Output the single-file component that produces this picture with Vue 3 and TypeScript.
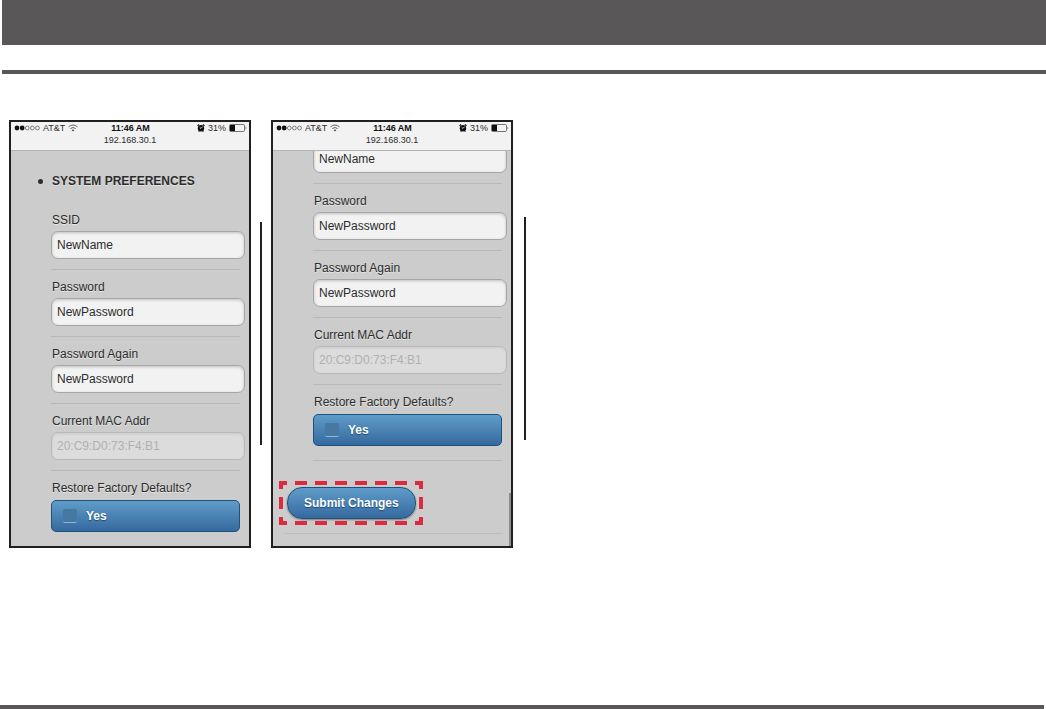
<script setup lang="ts">
import { ref } from 'vue'

interface Field {
  key: string
  label: string
  value: string
  disabled?: boolean
}

interface Screen {
  id: string
  scrolled: boolean
}

const fields = ref<Field[]>([
  { key: 'ssid', label: 'SSID', value: 'NewName' },
  { key: 'password', label: 'Password', value: 'NewPassword' },
  { key: 'again', label: 'Password Again', value: 'NewPassword' },
  { key: 'mac', label: 'Current MAC Addr', value: '20:C9:D0:73:F4:B1', disabled: true },
])

const restore = ref(false)

const screens: Screen[] = [
  { id: 'top', scrolled: false },
  { id: 'bottom', scrolled: true },
]

// On the scrolled screen the first label has moved above the visible area.
const labelShown = (s: Screen, f: Field): boolean => !(s.scrolled && f.key === 'ssid')
</script>

<template>
  <div class="page">
    <header class="banner"></header>
    <div class="rule"></div>
    <main class="figures">
      <template v-for="s in screens" :key="s.id">
        <section class="phone">
          <div class="status">
            <div class="status-row">
              <div class="carrier">
                <svg width="26" height="6" viewBox="0 0 26 6">
                  <circle cx="3" cy="3" r="2.4" fill="#111" />
                  <circle cx="8.2" cy="3" r="2.4" fill="#111" />
                  <circle cx="13.3" cy="3" r="1.9" fill="none" stroke="#555" stroke-width=".7" />
                  <circle cx="18.4" cy="3" r="1.9" fill="none" stroke="#555" stroke-width=".7" />
                  <circle cx="23.5" cy="3" r="1.9" fill="none" stroke="#555" stroke-width=".7" />
                </svg>
                <span>AT&amp;T</span>
                <svg width="10" height="8" viewBox="0 0 10 8" fill="none" stroke="#666" stroke-width="1">
                  <path d="M.6 2.9Q5-.9 9.4 2.9M2.3 4.6Q5 2.4 7.7 4.6" />
                  <path d="M3.6 5.9Q5 4.9 6.4 5.9L5 7.4Z" fill="#444" stroke="none" />
                </svg>
              </div>
              <span class="time">11:46 AM</span>
              <div class="power">
                <svg width="8" height="8" viewBox="0 0 8 8">
                  <circle cx="4" cy="4.2" r="3.2" fill="#111" />
                  <path d="M.5 1.9L2.1.5M7.5 1.9L5.9.5M1.6 7.6L2.4 6.6M6.4 7.6L5.6 6.6" stroke="#111" stroke-width="1.1" />
                  <path d="M5.6 2.7L4 4.4L2.8 3.6" fill="none" stroke="#f2f2f2" stroke-width=".8" />
                </svg>
                <span>31%</span>
                <svg width="18" height="8" viewBox="0 0 18 8">
                  <rect x=".5" y=".5" width="15" height="7" rx="1.2" fill="none" stroke="#555" stroke-width=".8" />
                  <rect x="1" y="1" width="5" height="6" fill="#111" />
                  <path d="M16.6 2.6Q18 4 16.6 5.4Z" fill="#333" />
                </svg>
              </div>
            </div>
            <div class="address">192.168.30.1</div>
          </div>
          <div class="viewport">
            <form :class="['form', { scrolled: s.scrolled }]" @submit.prevent>
              <h2 v-if="!s.scrolled" class="title">SYSTEM PREFERENCES</h2>
              <div v-for="f in fields" :key="f.key" class="field">
                <label v-if="labelShown(s, f)" :for="`${s.id}-${f.key}`">{{ f.label }}</label>
                <input
                  :id="`${s.id}-${f.key}`"
                  v-model="f.value"
                  type="text"
                  class="text"
                  :aria-label="f.label"
                  :disabled="f.disabled"
                />
              </div>
              <div class="field last">
                <span class="caption">Restore Factory Defaults?</span>
                <label class="toggle" :for="`${s.id}-restore`">
                  <input :id="`${s.id}-restore`" v-model="restore" type="checkbox" class="check" />
                  Yes
                </label>
              </div>
              <div v-if="s.scrolled" class="actions">
                <div class="callout">
                  <button type="submit" class="submit">Submit Changes</button>
                  <svg class="dashes" width="144" height="44" viewBox="0 0 144 44">
                    <rect x="2" y="2" width="140" height="40" fill="none" stroke="#dc2b3f" stroke-width="4" stroke-dasharray="12 8" stroke-dashoffset="6" />
                  </svg>
                </div>
              </div>
            </form>
            <div v-if="s.scrolled" class="scrollbar"></div>
          </div>
        </section>
        <div :class="['divider', { high: s.scrolled }]"></div>
      </template>
    </main>
    <footer class="foot"></footer>
  </div>
</template>

<style>
body {
  margin: 0;
  background: #fff;
}
</style>

<style scoped>
.page {
  display: flex;
  flex-direction: column;
  min-height: 100vh;
  font-family: "Liberation Sans", Arial, sans-serif;
  color: #2c2c2c;
}
.banner {
  height: 45px;
  margin-left: 2px;
  background: #595757;
}
.rule {
  height: 4px;
  margin: 25px 0 0 2px;
  background: #595757;
}
.figures {
  display: flex;
  align-items: flex-start;
  padding: 46px 9px 24px;
}
.phone {
  box-sizing: border-box;
  display: flex;
  flex-direction: column;
  width: 242px;
  height: 428px;
  border: 2px solid #231f20;
  background: #cccccc;
  overflow: hidden;
  flex: none;
}
.divider {
  width: 2px;
  height: 223px;
  margin: 102px 9px 0;
  background: #231f20;
  flex: none;
}
.divider.high {
  margin: 97px 0 0 11px;
}
.status {
  height: 28px;
  background: #f2f2f2;
  border-bottom: 1px solid #b4b4b4;
  flex: none;
}
.status-row {
  display: grid;
  grid-template-columns: 1fr auto 1fr;
  align-items: center;
  height: 12px;
  padding: 0 2px 0 3px;
  font-size: 9px;
  line-height: 12px;
}
.carrier,
.power {
  display: flex;
  align-items: center;
  gap: 3px;
}
.carrier svg,
.power svg {
  flex: none;
}
.power {
  justify-content: flex-end;
}
.time {
  font-weight: bold;
  color: #111;
}
.address {
  font-size: 9px;
  line-height: 12px;
  text-align: center;
}
.viewport {
  position: relative;
  flex: 1;
  min-height: 0;
  overflow: hidden;
}
.form {
  padding: 20px 9px 0 40px;
  font-size: 12px;
  text-shadow: 0 1px 0 #e4e4e4;
}
.form.scrolled {
  margin-top: -6px;
  padding-top: 0;
}
.title {
  display: flex;
  align-items: center;
  gap: 9px;
  margin: 0 0 19px -13px;
  font-size: 12px;
  line-height: 20px;
  font-weight: bold;
}
.title::before {
  content: "";
  width: 5px;
  height: 5px;
  border-radius: 50%;
  background: #2c2c2c;
}
.field {
  margin-bottom: 7px;
  padding-bottom: 10px;
  border-bottom: 1px solid #b8b8b8;
}
.field > label,
.caption {
  display: block;
  line-height: 20px;
  margin-bottom: 1px;
  padding-left: 1px;
}
.text {
  display: block;
  box-sizing: border-box;
  width: calc(100% + 5px);
  height: 28px;
  padding: 0 5px;
  border: 1px solid #a6a6a6;
  border-radius: 7px;
  background: #f2f2f2;
  box-shadow: inset 0 1px 3px rgba(0, 0, 0, 0.2);
  color: #2c2c2c;
  font: inherit;
}
.text:disabled {
  border-color: #b9b9b9;
  background: #dcdcdc;
  box-shadow: inset 0 1px 3px rgba(0, 0, 0, 0.08);
  color: #b0b0b0;
}
.last {
  margin-bottom: 0;
  padding-bottom: 14px;
}
.field > .toggle {
  box-sizing: border-box;
  display: flex;
  align-items: center;
  gap: 9px;
  height: 32px;
  margin: 2px 0 0;
  padding: 0 11px;
  border: 1px solid #1b5478;
  border-radius: 5px;
  background: linear-gradient(#5f9cc9, #36699f);
  color: #fff;
  font-weight: bold;
  text-shadow: 0 1px 1px #1c4a70;
}
.check {
  appearance: none;
  width: 14px;
  height: 14px;
  margin: 0;
  border-radius: 2px;
  border-bottom: 1px solid #8fb6d6;
  background: #4678a1;
}
.check:checked {
  background: #1c4a70;
}
.actions {
  margin-left: -29px;
  padding: 26px 0 14px 3px;
  border-bottom: 1px solid #bdbdbd;
}
.callout {
  position: relative;
  width: fit-content;
}
.submit {
  display: block;
  height: 32px;
  padding: 0 16px;
  border: 1px solid #1b5478;
  border-radius: 15px;
  background: linear-gradient(#5f9cc9, #36699f);
  box-shadow: 0 1px 2px rgba(0, 0, 0, 0.4);
  color: #fff;
  font: bold 12px "Liberation Sans", Arial, sans-serif;
  text-shadow: 0 1px 1px #1c4a70;
}
.dashes {
  position: absolute;
  top: -6px;
  left: -8px;
  pointer-events: none;
}
.scrollbar {
  position: absolute;
  right: 0;
  bottom: 0;
  width: 2px;
  height: 53px;
  background: #8c8c8c;
}
.foot {
  height: 4px;
  margin: auto 2px 0 0;
  background: #595757;
}
</style>
